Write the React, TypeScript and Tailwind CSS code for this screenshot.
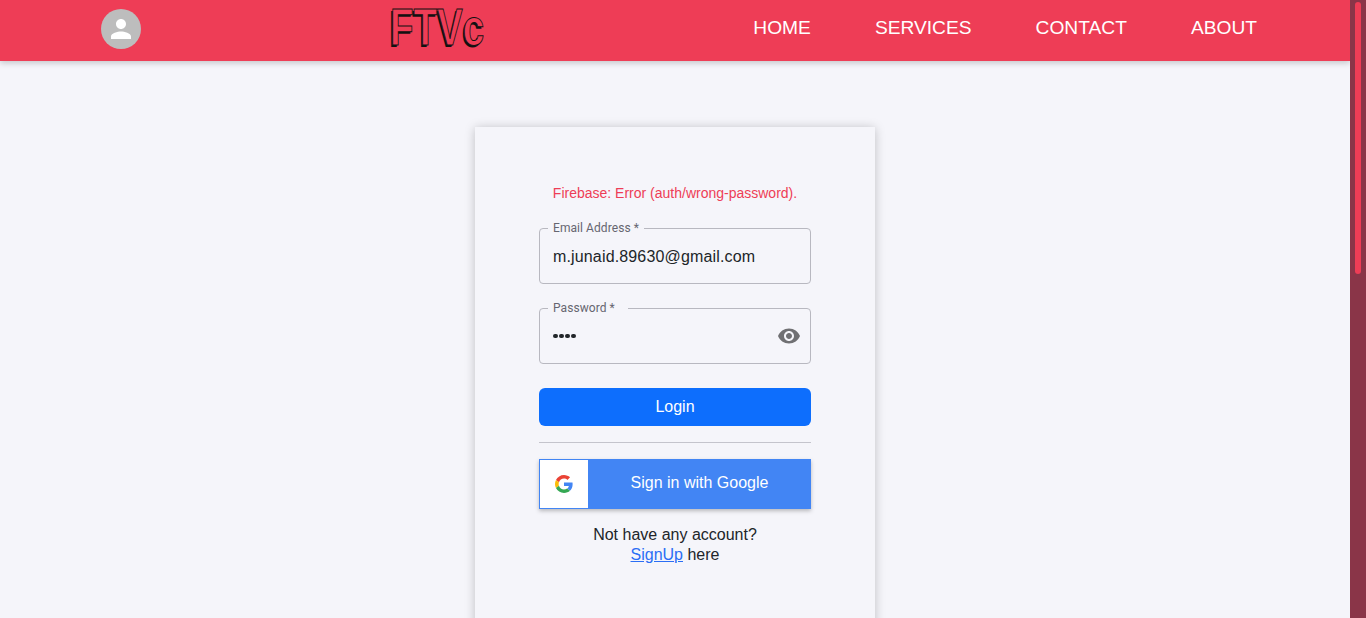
export default function App() {
  const sans = "font-['Liberation_Sans',Arial,sans-serif]";
  return (
    <div className={`flex h-[618px] overflow-hidden bg-[#f5f5fa] text-[#212529] ${sans}`}>
      <div className="min-w-0 flex-1 overflow-hidden">
        <nav className="relative z-10 flex h-[61px] items-start bg-[#ee3d56] shadow-[0_2px_6px_rgba(0,0,0,0.2)]">
          <div className="ml-[101px] mt-[9px] flex h-[40px] w-[40px] items-center justify-center rounded-full bg-[#bdbdbd]">
            <svg viewBox="0 0 24 24" className="h-[30px] w-[30px] fill-white">
              <path d="M12 12c2.21 0 4-1.79 4-4s-1.79-4-4-4-4 1.79-4 4 1.79 4 4 4zm0 2c-2.67 0-8 1.34-8 4v2h16v-2c0-2.66-5.33-4-8-4z" />
            </svg>
          </div>
          <div className="ml-[249px] mt-[-1px] h-[56px] w-[132px] origin-left scale-x-[0.74] whitespace-nowrap text-[52px] leading-[56px] font-bold text-[#ee3d56] [-webkit-text-stroke:1px_#111] [text-shadow:-2px_1.5px_0_#111]">
            FTVc
          </div>
          <ul className="ml-auto mr-[93px] flex h-[57px] items-center gap-[64px] text-[19.2px] text-white">
            <li>HOME</li>
            <li>SERVICES</li>
            <li>CONTACT</li>
            <li>ABOUT</li>
          </ul>
        </nav>
        <main className="pt-[66px]">
          <div className="mx-auto h-[900px] w-[400px] bg-[#f5f5fa] px-[64px] pt-[58px] shadow-[0_1px_10px_rgba(0,0,0,0.22)]">
            <p className="h-[16px] text-center text-[14px] leading-[16px] text-[#ee3d56]">Firebase: Error (auth/wrong-password).</p>
            <fieldset className="mt-[22px] h-[61px] rounded-[4px] border border-[#b8b8c0] pl-[8px] pr-[9px]">
              <legend className="px-[5px] font-['Roboto',sans-serif] text-[12px] leading-[11px] tracking-[0.07px] text-[#666670]">Email Address *</legend>
              <div className="flex h-[44px] items-center pl-[5px] pt-[2px] text-[16px] tracking-[0.15px]">m.junaid.89630@gmail.com</div>
            </fieldset>
            <fieldset className="mt-[19px] h-[61px] rounded-[4px] border border-[#b8b8c0] pl-[8px] pr-[9px]">
              <legend className="w-[80px] px-[5px] font-['Roboto',sans-serif] text-[12px] leading-[11px] tracking-[0.07px] text-[#666670]">Password *</legend>
              <div className="flex h-[44px] items-center justify-between pl-[5px] text-[16px]">
                <span className="flex gap-[1.5px]">
                  <i className="h-[4.5px] w-[4.5px] rounded-full bg-[#212529]" />
                  <i className="h-[4.5px] w-[4.5px] rounded-full bg-[#212529]" />
                  <i className="h-[4.5px] w-[4.5px] rounded-full bg-[#212529]" />
                  <i className="h-[4.5px] w-[4.5px] rounded-full bg-[#212529]" />
                </span>
                <svg viewBox="0 0 24 24" className="h-[24px] w-[24px] fill-[#707073]">
                  <path d="M12 4.5C7 4.5 2.73 7.61 1 12c1.73 4.39 6 7.5 11 7.5s9.27-3.11 11-7.5c-1.73-4.39-6-7.5-11-7.5zM12 17c-2.76 0-5-2.24-5-5s2.24-5 5-5 5 2.24 5 5-2.24 5-5 5zm0-8c-1.66 0-3 1.34-3 3s1.34 3 3 3 3-1.34 3-3-1.34-3-3-3z" />
                </svg>
              </div>
            </fieldset>
            <button className="mt-[24px] block h-[38px] w-full rounded-[6px] bg-[#0d6efd] text-[16px] text-white">Login</button>
            <hr className="mt-[16px] border-t border-[#c4c4cc]" />
            <button className="mt-[16px] flex h-[50px] w-full items-center bg-[#4285f4] p-[1px] text-[16px] text-white shadow-[0_2px_4px_rgba(0,0,0,0.25)]">
              <span className="flex h-[48px] w-[48px] items-center justify-center bg-white">
                <svg viewBox="0 0 48 48" className="h-[18px] w-[18px]">
                  <path fill="#EA4335" d="M24 9.5c3.54 0 6.71 1.22 9.21 3.6l6.85-6.85C35.9 2.38 30.47 0 24 0 14.62 0 6.51 5.38 2.56 13.22l7.98 6.19C12.43 13.72 17.74 9.5 24 9.5z" />
                  <path fill="#4285F4" d="M46.98 24.55c0-1.57-.15-3.09-.38-4.55H24v9.02h12.94c-.58 2.96-2.26 5.48-4.78 7.18l7.73 6c4.51-4.18 7.09-10.36 7.09-17.65z" />
                  <path fill="#FBBC05" d="M10.53 28.59c-.48-1.45-.76-2.99-.76-4.59s.27-3.14.76-4.59l-7.98-6.19C.92 16.46 0 20.12 0 24c0 3.88.92 7.54 2.56 10.78l7.97-6.19z" />
                  <path fill="#34A853" d="M24 48c6.48 0 11.93-2.13 15.89-5.81l-7.73-6c-2.15 1.45-4.92 2.3-8.16 2.3-6.26 0-11.57-4.22-13.47-9.91l-7.98 6.19C6.51 42.62 14.62 48 24 48z" />
                </svg>
              </span>
              <span className="flex-1 pb-[2px] pl-[1px] text-center">Sign in with Google</span>
            </button>
            <p className="mt-[16px] text-center text-[16px] leading-[20px]">
              Not have any account?<br />
              <a className="text-[#2a6ef5] underline">SignUp</a> here
            </p>
          </div>
        </main>
      </div>
      <aside className="w-[16px] shrink-0 bg-[#8a3548] pl-[5px] pt-[2px]">
        <div className="h-[272px] w-[6px] rounded-[3px] bg-[#ee3d56]" />
      </aside>
    </div>
  );
}
